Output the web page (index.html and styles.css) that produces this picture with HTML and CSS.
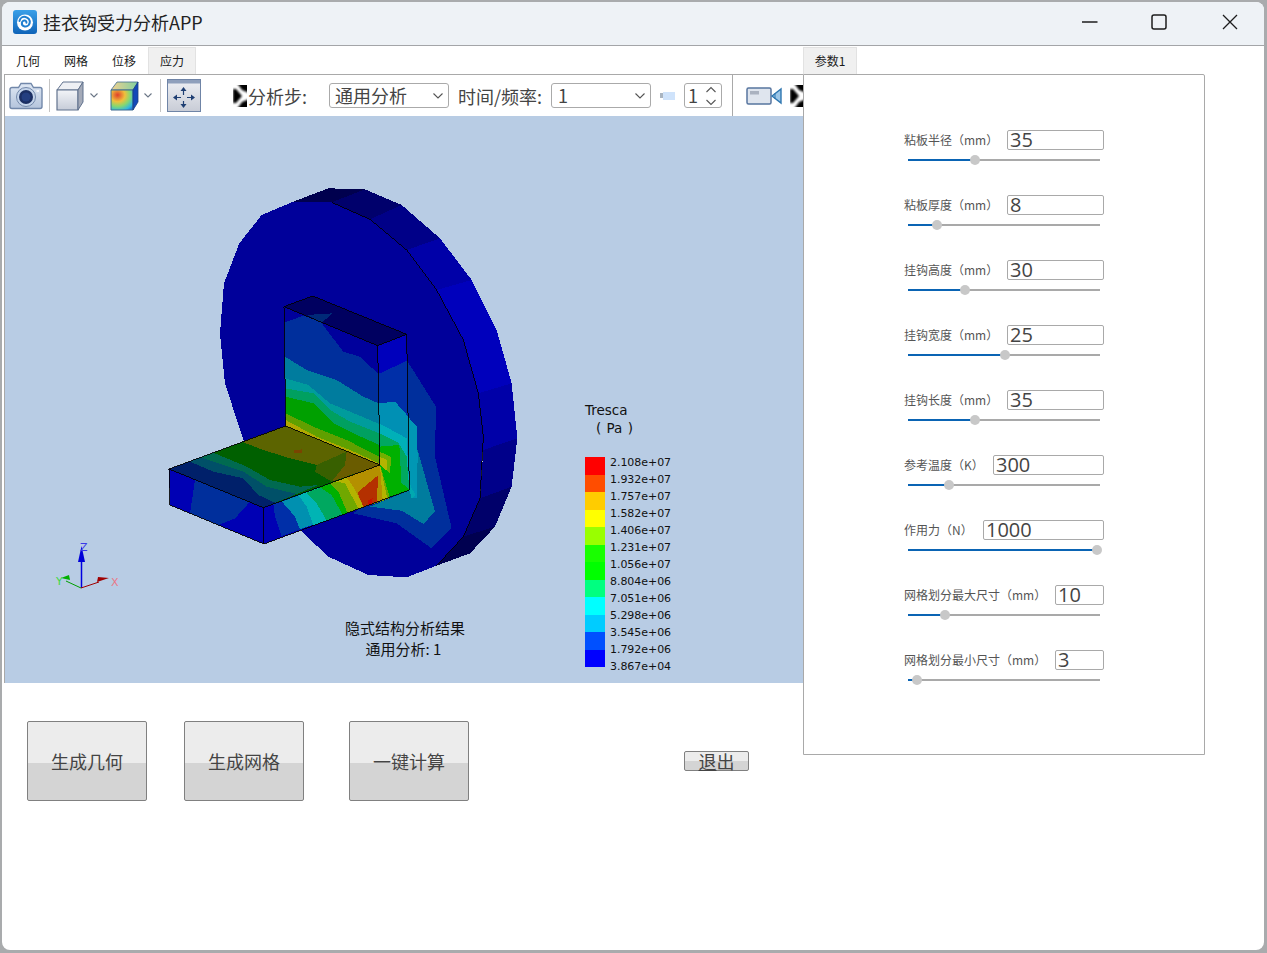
FILE: index.html
```html
<!DOCTYPE html>
<html lang="zh-CN">
<head>
<meta charset="utf-8">
<title>挂衣钩受力分析APP</title>
<link rel="stylesheet" href="styles.css">
</head>
<body>
<div class="window">
  <header class="titlebar">
    <svg class="app-icon" viewBox="0 0 24 24">
      <defs>
        <linearGradient id="appg" x1="0" y1="0" x2="0" y2="1"><stop offset="0" stop-color="#3aa0e8"/><stop offset="1" stop-color="#0f64b8"/></linearGradient>
      </defs>
      <rect width="24" height="24" rx="3" fill="url(#appg)"/>
      <ellipse cx="12" cy="12.500" rx="8" ry="8" fill="#fff"/>
      <path d="M6.500 11c.6-3 3.400-4.600 6-4.100 3 .6 4.800 3.300 4.200 6.100-.5 2.300-2.800 3.900-5.100 3.400-1.900-.4-3-2.100-2.700-3.800.3-1.400 1.600-2.300 3-2 1 .2 1.700 1.200 1.500 2.200" fill="none" stroke="#1f7fd0" stroke-width="2" stroke-linecap="round"/>
    </svg>
    <span class="app-title">挂衣钩受力分析APP</span>
    <div class="win-controls">
      <svg class="win-btn min" viewBox="0 0 16 16"><path d="M0 8h15.500" stroke="#1c1c1c" stroke-width="1.300" fill="none"/></svg>
      <svg class="win-btn max" viewBox="0 0 16 16"><rect x="1" y="1" width="14" height="14" rx="2" stroke="#1c1c1c" stroke-width="1.500" fill="none"/></svg>
      <svg class="win-btn close" viewBox="0 0 16 16"><path d="M1 1l14 14M15 1L1 15" stroke="#1c1c1c" stroke-width="1.300" fill="none"/></svg>
    </div>
  </header>

  <div class="client">
    <section class="left">
      <nav class="tabs">
        <span class="tab">几何</span>
        <span class="tab">网格</span>
        <span class="tab">位移</span>
        <span class="tab active">应力</span>
      </nav>
      <div class="work">
        <div class="toolbar">
          <svg class="tool camera" viewBox="0 0 34 30">
            <defs>
              <linearGradient id="camg" x1="0" y1="0" x2="0" y2="1"><stop offset="0" stop-color="#dfe8f4"/><stop offset="1" stop-color="#b4c4dc"/></linearGradient>
              <linearGradient id="moveg" x1="0" y1="0" x2="0" y2="1"><stop offset="0" stop-color="#eef0f4"/><stop offset="1" stop-color="#c8ccd6"/></linearGradient>
              <linearGradient id="cubeg" x1="0" y1="0" x2="0" y2="1"><stop offset="0" stop-color="#f2f4f8"/><stop offset="1" stop-color="#c6ccd8"/></linearGradient>
              <radialGradient id="ccg" cx=".3" cy=".25" r=".95"><stop offset="0" stop-color="#e0402a"/><stop offset=".35" stop-color="#f0c03c"/><stop offset=".6" stop-color="#86d870"/><stop offset=".85" stop-color="#30b8e0"/><stop offset="1" stop-color="#2070d8"/></radialGradient>
              <linearGradient id="cctop" x1="0" y1="0" x2="1" y2="0"><stop offset="0" stop-color="#f0d090"/><stop offset="1" stop-color="#7fd0a0"/></linearGradient>
              <filter id="blur1" x="-30%" y="-30%" width="160%" height="160%"><feGaussianBlur stdDeviation=".9"/></filter>
            </defs>
            <path d="M3 6.500h6.500l2.500-4h10l2.500 4H31c1.100 0 2 .9 2 2v17c0 1.100-.9 2-2 2H3c-1.100 0-2-.9-2-2v-17c0-1.100.9-2 2-2z" fill="url(#camg)" stroke="#7288aa" stroke-width="1.400"/>
            <circle cx="17" cy="16" r="9.500" fill="#c4d4ea" stroke="#7288aa"/>
            <circle cx="17" cy="16" r="7" fill="#1b2f63"/>
            <circle cx="17" cy="16" r="4.500" fill="#243f80"/>
            <rect x="27.500" y="9" width="2.500" height="2" fill="#f4f6fa"/>
          </svg>
          <span class="sep sep-a"></span>
          <svg class="tool cube" viewBox="0 0 28 30">
            <path d="M1 9l6-8h20l-5 8z" fill="#eef0f4" stroke="#61728e" stroke-width="1"/>
            <path d="M1 9h21v20H1z" fill="url(#cubeg)" stroke="#61728e" stroke-width="1.200"/>
            <path d="M22 9l5-8v20l-5 8z" fill="#a4aab8" stroke="#61728e" stroke-width="1"/>
          </svg>
          <svg class="chev chev-a" viewBox="0 0 8 5"><path d="M.5.500L4 4 7.500.500" fill="none" stroke="#6b7686" stroke-width="1.100"/></svg>
          <svg class="tool ccube" viewBox="0 0 29 30">
            <path d="M1 9l6-8h21l-5 8z" fill="url(#cctop)" stroke="#3f6a90" stroke-width=".8"/>
            <path d="M1 9h22v20H1z" fill="url(#ccg)" stroke="#3f6a90" stroke-width="1"/>
            <path d="M23 9l5-8v20l-5 8z" fill="#1248b8" stroke="#1a3f80" stroke-width=".8"/>
          </svg>
          <svg class="chev chev-b" viewBox="0 0 8 5"><path d="M.5.500L4 4 7.500.500" fill="none" stroke="#6b7686" stroke-width="1.100"/></svg>
          <span class="sep sep-b"></span>
          <svg class="tool move" viewBox="0 0 34 33">
            <rect x=".5" y=".5" width="33" height="32" fill="url(#moveg)" stroke="#6f84a6"/>
            <rect x="1" y="1" width="32" height="3.500" fill="#8fa0bc"/>
            <g fill="none" stroke="#1f3f73" stroke-width="1.200"><path d="M16.500 11v5M16.500 22v5M9 18.500h5M20 18.500h5"/></g>
            <g fill="#1f3f73"><path d="M16.500 8l3 4h-6zM16.500 29l3-4h-6zM6 18.500l4-3v6zM28 18.500l-4-3v6z"/></g>
          </svg>
          <svg class="tool bow bow-a" viewBox="0 0 14 22">
            <g fill="#000" filter="url(#blur1)">
              <path d="M4 -2h12V8L9 5zM0 4h3l6 7-6 7H0zM4 24h12V14l-7 3z"/>
            </g>
          </svg>
          <span class="tb-label label-a">分析步:</span>
          <div class="combo combo-a"><span>通用分析</span><svg class="combo-chev" viewBox="0 0 10 6"><path d="M.5.500L5 5 9.500.500" fill="none" stroke="#555" stroke-width="1.100"/></svg></div>
          <span class="tb-label label-b">时间/频率:</span>
          <div class="combo combo-b"><span>1</span><svg class="combo-chev" viewBox="0 0 10 6"><path d="M.5.500L5 5 9.500.500" fill="none" stroke="#555" stroke-width="1.100"/></svg></div>
          <div class="mini"><span class="mini-a"></span><span class="mini-b"></span></div>
          <div class="spin"><span>1</span><svg class="spin-arrows" viewBox="0 0 10 20"><path d="M.5 6L5 1.500 9.500 6M.5 14L5 18.500 9.500 14" fill="none" stroke="#555" stroke-width="1.100"/></svg></div>
          <span class="sep sep-c"></span>
          <svg class="tool vcam" viewBox="0 0 36 20">
            <rect x="1" y="2" width="24" height="16" rx="1.500" fill="#dfe5ee" stroke="#57759f" stroke-width="1.500"/>
            <rect x="4" y="5" width="9" height="3.500" fill="#aab2c0"/>
            <path d="M26 10l9-7v14z" fill="#9cc6e8" stroke="#2e76b0" stroke-width="1.400"/>
            <path d="M29 7v6" stroke="#2e76b0"/>
          </svg>
          <svg class="tool bow bow-b" viewBox="0 0 14 22">
            <g fill="#000" filter="url(#blur1)">
              <path d="M4 -2h12V8L9 5zM0 4h3l6 7-6 7H0zM4 24h12V14l-7 3z"/>
            </g>
          </svg>
        </div>

        <div class="viewport">
          <svg class="model" viewBox="5 116 798 567">
            <g transform="translate(150 170) scale(.33333)" class="mesh">
              <!-- rim -->
              <polygon fill="#00004e" points="430,95 535,55 645,58 545,97"/>
              <polygon fill="#00006c" points="545,97 645,58 755,105 660,148"/>
              <polygon fill="#000088" points="660,148 755,105 870,205 770,240"/>
              <polygon fill="#0000a8" points="770,240 870,205 965,330 860,360"/>
              <polygon fill="#0000bc" points="860,360 965,330 1040,480 1085,640 985,670 940,510"/>
              <polygon fill="#0000a8" points="985,670 1085,640 1102,805 1000,840"/>
              <polygon fill="#00008a" points="1000,840 1102,805 1085,950 990,985"/>
              <polygon fill="#00006a" points="990,985 1085,950 1035,1070 940,1100"/>
              <polygon fill="#000050" points="940,1100 1035,1070 960,1150 860,1187"/>
              <!-- disc face -->
              <polygon fill="#00009a" points="430,95 545,97 660,148 770,240 860,360 940,510 985,670 1000,800 990,985 940,1100 860,1187 770,1222 655,1215 535,1160 450,1080 280,810 225,640 210,490 222,340 268,220 335,135"/>
              <polyline class="edge" points="545,97 660,148 770,240 860,360 940,510 985,670 1000,800 990,985 940,1100 860,1187"/>
              <!-- contour bands on disc -->
              <polygon fill="#002f9c" points="770,570 858,710 855,860 905,1075 845,1135 740,1060 610,1030 650,1000 780,960"/>
              <polygon fill="#007c9e" points="690,700 735,695 800,770 800,830 855,1025 820,1062 755,1022 660,1010 780,960"/>
              <polygon fill="#0097b4" points="690,700 735,695 800,770 803,860 800,985 785,985 778,960 690,900"/>
              <polygon fill="#00a8b0" points="770,805 782,950 797,975 785,985 778,960 760,900"/>
              <!-- vertical plate: side -->
              <polygon fill="#0000bc" points="683,527 770,493 778,960 690,885"/>
              <polygon fill="#002fa8" points="685,612 772,572 775,960 690,885"/>
              <polygon fill="#0090b4" points="686,700 735,695 775,740 778,960 690,885"/>
              <polygon fill="#00b0b8" points="688,760 770,805 778,960 690,885"/>
              <polygon fill="#00a860" points="688,790 745,818 770,860 778,960 690,885"/>
              <polygon fill="#00b000" points="688,830 748,825 755,950 690,885"/>
              <polygon fill="#70b000" points="688,845 722,860 720,980 690,885"/>
              <polygon fill="#b4b400" points="688,860 712,870 712,985 690,885"/>
              <!-- vertical plate: front -->
              <polygon fill="#00009c" points="402,410 683,527 688,885 407,768"/>
              <polygon fill="#002f9c" points="402,458 480,430 515,460 580,545 630,560 685,612 688,885 407,768"/>
              <polygon fill="#007c9e" points="405,560 470,600 560,630 640,680 686,700 688,885 407,768"/>
              <polygon fill="#009c9c" points="405,625 475,645 540,700 600,725 688,762 688,885 407,768"/>
              <polygon fill="#00a060" points="405,655 490,670 540,720 600,755 688,790 688,885 407,768"/>
              <polygon fill="#00a000" points="407,680 490,700 550,760 610,790 688,825 688,885 407,768"/>
              <polygon fill="#60a000" points="407,730 490,770 590,810 688,860 688,885 407,768"/>
              <polygon fill="#b0a800" points="407,750 500,800 600,840 688,880 688,885 407,768"/>
              <!-- horizontal plate: end face -->
              <polygon fill="#0000b4" points="57,897 340,1013 342,1122 60,1005"/>
              <polygon fill="#002f9c" points="135,930 120,1030 205,1065 255,1045 300,995"/>
              <!-- horizontal plate: side -->
              <polygon fill="#0000b4" points="340,1013 690,885 778,960 342,1122"/>
              <polygon fill="#002fa8" points="370,1000 690,885 780,960 395,1098 375,1040"/>
              <polygon fill="#0090b0" points="396,995 690,885 780,960 450,1078 435,1040"/>
              <polygon fill="#00b4b4" points="445,975 690,885 780,960 490,1066 470,1010"/>
              <polygon fill="#00a860" points="470,968 690,885 780,960 530,1052 500,1000"/>
              <polygon fill="#00b000" points="510,952 690,885 780,960 578,1035 545,975"/>
              <polygon fill="#70a800" points="540,940 690,885 720,985 592,1028 565,965"/>
              <polygon fill="#b4b400" points="558,935 690,885 712,985 625,1015 585,940"/>
              <polygon fill="#b49000" points="590,922 690,885 698,990 640,1010 610,950"/>
              <polygon fill="#b43000" points="622,968 685,915 680,995 640,1010"/>
              <polygon fill="#c81000" points="652,992 668,985 664,1005 656,1006"/>
              <!-- horizontal plate: top -->
              <polygon fill="#006000" points="57,897 407,768 690,885 340,1013"/>
              <polygon fill="#5c6400" points="275,815 407,768 590,845 500,885 420,865 340,840"/>
              <polygon fill="#386000" points="500,885 590,845 640,865 545,935 495,905"/>
              <polygon fill="#6a5c00" points="590,845 690,885 545,935 585,885"/>
              <polygon fill="#006a50" points="57,897 190,848 290,890 360,930 450,950 505,945 340,1013"/>
              <polygon fill="#005068" points="57,897 150,862 280,905 350,950 440,972 340,1013"/>
              <polygon fill="#00206a" points="57,897 120,875 190,905 280,925 325,975 375,998 340,1013"/>
              <polygon fill="#7a4400" points="430,842 455,838 455,850 435,850"/>
              <!-- plate cap -->
              <polygon fill="#000060" points="402,410 488,378 770,493 683,527"/>
              <polygon fill="#002a78" points="470,435 548,430 515,458"/>
              <!-- outlines -->
              <polyline class="edge" points="402,410 488,378 770,493 683,527 402,410 407,768"/>
              <polyline class="edge" points="683,527 690,885"/>
              <polyline class="edge" points="770,493 778,960"/>
              <polyline class="edge" points="407,768 690,885 340,1013 57,897 407,768"/>
              <polyline class="edge" points="57,897 60,1005 342,1122 340,1013"/>
              <polyline class="edge" points="342,1122 778,960"/>
            </g>
            <!-- triad -->
            <g class="triad">
              <path d="M81.500 588V560" stroke="#0000e0" stroke-width="1.500"/>
              <path d="M81.500 546l3.500 16h-7z" fill="#0000d8"/>
              <path d="M81 588l-15-7" stroke="#00a000"/>
              <path d="M61 578l8-3 1 5z" fill="#00b000"/>
              <path d="M81 588l18-6" stroke="#a00000"/>
              <path d="M109 578l-11-1-1 5z" fill="#a00000"/>
              <text class="axis ax-z" x="80" y="551">Z</text>
              <text class="axis ax-y" x="56" y="585">Y</text>
              <text class="axis ax-x" x="111" y="586">X</text>
            </g>
          </svg>
          <div class="legend">
            <div class="legend-title">Tresca</div>
            <div class="legend-unit">( Pa )</div>
            <div class="legend-body">
              <div class="legend-bar">
                <span class="c1"></span><span class="c2"></span><span class="c3"></span><span class="c4"></span><span class="c5"></span><span class="c6"></span><span class="c7"></span><span class="c8"></span><span class="c9"></span><span class="c10"></span><span class="c11"></span><span class="c12"></span>
              </div>
              <div class="legend-values">
                <span>2.108e+07</span><span>1.932e+07</span><span>1.757e+07</span><span>1.582e+07</span><span>1.406e+07</span><span>1.231e+07</span><span>1.056e+07</span><span>8.804e+06</span><span>7.051e+06</span><span>5.298e+06</span><span>3.545e+06</span><span>1.792e+06</span><span>3.867e+04</span>
              </div>
            </div>
          </div>
          <div class="caption">
            <div>隐式结构分析结果</div>
            <div class="caption-sub">通用分析: 1</div>
          </div>
        </div>
      </div>

      <div class="actions">
        <button class="big first">生成几何</button>
        <button class="big second">生成网格</button>
        <button class="big third">一键计算</button>
        <button class="quit"><u>退</u>出</button>
      </div>
    </section>

    <aside class="right">
      <nav class="tabs right-tabs"><span class="tab active param-tab">参数1</span></nav>
      <div class="panel">
        <div class="param"><div class="param-head"><label>粘板半径（mm）</label><input class="w97" value="35"></div><div class="slider"><div class="fill" style="width:34.9%"><i class="thumb"></i></div></div></div>
        <div class="param"><div class="param-head"><label>粘板厚度（mm）</label><input class="w97" value="8"></div><div class="slider"><div class="fill" style="width:15.1%"><i class="thumb"></i></div></div></div>
        <div class="param"><div class="param-head"><label>挂钩高度（mm）</label><input class="w97" value="30"></div><div class="slider"><div class="fill" style="width:29.7%"><i class="thumb"></i></div></div></div>
        <div class="param"><div class="param-head"><label>挂钩宽度（mm）</label><input class="w97" value="25"></div><div class="slider"><div class="fill" style="width:50.5%"><i class="thumb"></i></div></div></div>
        <div class="param"><div class="param-head"><label>挂钩长度（mm）</label><input class="w97" value="35"></div><div class="slider"><div class="fill" style="width:34.9%"><i class="thumb"></i></div></div></div>
        <div class="param"><div class="param-head"><label>参考温度（K）</label><input class="w111" value="300"></div><div class="slider"><div class="fill" style="width:21.4%"><i class="thumb"></i></div></div></div>
        <div class="param"><div class="param-head"><label>作用力（N）</label><input class="w121" value="1000"></div><div class="slider"><div class="fill" style="width:98.4%"><i class="thumb"></i></div></div></div>
        <div class="param"><div class="param-head"><label>网格划分最大尺寸（mm）</label><input class="w49" value="10"></div><div class="slider"><div class="fill" style="width:19.3%"><i class="thumb"></i></div></div></div>
        <div class="param last"><div class="param-head"><label>网格划分最小尺寸（mm）</label><input class="w49" value="3"></div><div class="slider"><div class="fill" style="width:4.7%"><i class="thumb"></i></div></div></div>
      </div>
    </aside>
  </div>
</div>
</body>
</html>
```

FILE: styles.css
```css
* { box-sizing: border-box; }
html, body { margin: 0; padding: 0; height: 953px; overflow: hidden; }
body {
  background: #a9abad;
  font-family: "Noto Sans CJK SC", "Noto Sans", sans-serif;
  color: #333;
}
.window {
  margin: 2px 3px 0 2px;
  height: 948px;
  background: #fff;
  border-radius: 8px;
  overflow: hidden;
  display: flex;
  flex-direction: column;
}

/* title bar */
.titlebar {
  height: 44px;
  flex: none;
  background: #eef2f6;
  border-bottom: 1px solid #a3a5a8;
  display: flex;
  align-items: center;
  padding: 0 0 3px 11px;
}
.app-icon { width: 24px; height: 24px; flex: none; }
.app-title { margin-left: 6px; font-size: 18px; line-height: 24px; color: #222; white-space: nowrap; }
.win-controls { margin-left: auto; display: flex; align-items: center; }
.win-btn { width: 16px; height: 16px; flex: none; }
.win-btn.min { margin-right: 53px; }
.win-btn.max { margin-right: 55px; }
.win-btn.close { margin-right: 26px; }

/* layout */
.client { display: flex; flex: 1; min-height: 0; }
.left { width: 801px; flex: none; padding: 1px 0 0 2px; }
.right { width: 402px; flex: none; padding-top: 1px; }

/* tabs */
.tabs { height: 27px; display: flex; }
.tab {
  width: 48px;
  font-size: 12px;
  line-height: 27px;
  text-align: center;
  color: #1a1a1a;
}
.tab.active {
  background: #f0f0f0;
  box-shadow: inset 1px 0 #e2e2e2, inset -1px 0 #e2e2e2, inset 0 1px #e2e2e2;
}
.param-tab { width: 54px; }

/* toolbar */
.work { border-top: 1px solid #a9a9a9; border-left: 1px solid #a9a9a9; }
.toolbar {
  height: 41px;
  display: flex;
  align-items: center;
  overflow: hidden;
  background: #fff;
  white-space: nowrap;
}
.tool, .sep, .chev, .combo, .mini, .spin, .tb-label { flex: none; }
.sep { width: 1px; align-self: stretch; background: #c4c4c4; }
.camera { width: 34px; height: 30px; margin-left: 4px; }
.sep-a { margin-left: 6px; margin-top: 4px; margin-bottom: 4px; }
.cube { width: 28px; height: 30px; margin-left: 6px; }
.chev { width: 8px; height: 5px; }
.chev-a { margin-left: 6px; }
.ccube { width: 29px; height: 30px; margin-left: 12px; }
.chev-b { margin-left: 5px; }
.sep-b { margin-left: 8px; margin-top: 4px; margin-bottom: 4px; }
.move { width: 34px; height: 33px; margin-left: 6px; }
.bow { width: 14px; height: 22px; }
.bow-a { margin-left: 32px; }
.bow-b { margin-left: 8px; }
.tb-label { font-size: 18px; line-height: 24px; color: #444; }
.label-a { width: 62px; margin-left: 1px; }
.label-b { width: 85px; margin-left: 9px; }
.combo {
  height: 25px;
  border: 1px solid #aaa;
  border-radius: 3px;
  display: flex;
  align-items: center;
  justify-content: space-between;
  font-size: 18px;
  line-height: 23px;
  color: #444;
  padding: 0 5px 0 5px;
}
.combo-a { width: 120px; margin-left: 19px; }
.combo-b { width: 100px; margin-left: 8px; padding-left: 6px; }
.combo-chev { width: 10px; height: 6px; flex: none; }
.mini { width: 15px; height: 8px; margin-left: 9px; display: flex; align-items: center; }
.mini-a { width: 3px; height: 5px; background: #a9b4c0; }
.mini-b { width: 12px; height: 8px; background: #cfe3fb; }
.spin {
  width: 38px;
  height: 25px;
  margin-left: 9px;
  border: 1px solid #aaa;
  border-radius: 3px;
  display: flex;
  align-items: center;
  justify-content: space-between;
  padding: 0 5px 0 3px;
  font-size: 18px;
  line-height: 23px;
  color: #444;
}
.spin-arrows { width: 10px; height: 20px; flex: none; }
.sep-c { margin-left: 10px; background: #a9a9a9; }
.vcam { width: 36px; height: 20px; margin-left: 13px; }

/* viewport */
.viewport {
  position: relative;
  height: 567px;
  background: #b8cce4;
  overflow: hidden;
}
.model { display: block; width: 798px; height: 567px; shape-rendering: crispEdges; }
.edge { fill: none; stroke: #000; stroke-width: 2.600; }
.triad { shape-rendering: auto; }
.axis { font-family: "DejaVu Sans", sans-serif; font-size: 11px; }
.ax-z { fill: #3a3ae8; }
.ax-y { fill: #40d840; }
.ax-x { fill: #e87888; }

.legend {
  position: absolute;
  left: 580px;
  top: 285px;
  font-family: "DejaVu Sans", sans-serif;
  color: #111;
}
.legend-title { font-size: 13.500px; line-height: 18px; }
.legend-unit { font-size: 13.500px; line-height: 18px; margin-left: 11px; word-spacing: 1px; }
.legend-body { display: flex; margin-top: 20px; }
.legend-bar { width: 20px; height: 210px; display: flex; flex-direction: column; }
.legend-bar span { flex: 1; }
.c1 { background: #ff0000; }
.c2 { background: #ff4d00; }
.c3 { background: #ffcc00; }
.c4 { background: #ffff00; }
.c5 { background: #99ff00; }
.c6 { background: #19ff00; }
.c7 { background: #00ff00; }
.c8 { background: #00ff80; }
.c9 { background: #00ffff; }
.c10 { background: #00ccff; }
.c11 { background: #0050ff; }
.c12 { background: #0000ff; }
.legend-values {
  margin: -3px 0 0 5px;
  display: flex;
  flex-direction: column;
  font-size: 11px;
  line-height: 17px;
  letter-spacing: -.05px;
  white-space: nowrap;
}

.caption {
  position: absolute;
  left: 340px;
  top: 501px;
  width: 120px;
  font-size: 15px;
  line-height: 21px;
  text-align: center;
  color: #111;
  white-space: nowrap;
}
.caption-sub { margin-left: -3px; }

/* action buttons */
.actions { display: flex; align-items: flex-start; padding: 38px 0 0 23px; }
button { font-family: inherit; color: #444; padding: 0; cursor: default; }
.big {
  width: 120px;
  height: 80px;
  flex: none;
  font-size: 18px;
  line-height: 24px;
  border: 1px solid #808080;
  border-radius: 2px;
  background: linear-gradient(#ececec 0, #ececec 52%, #d4d4d4 53%, #d4d4d4 100%);
}
.second { margin-left: 37px; }
.third { margin-left: 45px; }
.quit {
  width: 65px;
  height: 20px;
  flex: none;
  margin: 30px 0 0 215px;
  font-size: 18px;
  line-height: 18px;
  border: 1px solid #808080;
  border-radius: 2px;
  background: linear-gradient(#ececec 0, #ececec 50%, #d4d4d4 51%, #d4d4d4 100%);
  overflow: visible;
}

/* right panel */
.panel {
  height: 681px;
  border: 1px solid #a9a9a9;
  border-radius: 0 2px 0 0;
  background: #fff;
  padding: 55px 100px 0 100px;
}
.param { margin-bottom: 34px; }
.param.last { margin-top: 1px; }
.param-head { display: flex; justify-content: space-between; align-items: center; height: 20px; }
.param-head label { font-size: 12px; line-height: 20px; color: #555; white-space: nowrap; }
.param-head input {
  height: 20px;
  border: 1px solid #a9a9a9;
  border-radius: 2px;
  padding: 0 2px 2px 2px;
  font-family: "Open Sans", "Noto Sans", sans-serif;
  font-size: 20px;
  line-height: 17px;
  color: #444;
  background: #fff;
  outline: none;
}
.w97 { width: 97px; }
.w111 { width: 111px; }
.w121 { width: 121px; }
.w49 { width: 49px; }
.slider { height: 2px; margin: 9px 4px 0 4px; background: #a9a9a9; }
.fill { position: relative; height: 2px; background: #0a64b4; }
.thumb {
  position: absolute;
  right: -5px;
  top: -4px;
  width: 10px;
  height: 10px;
  border-radius: 50%;
  background: #c8c8c8;
}
```
